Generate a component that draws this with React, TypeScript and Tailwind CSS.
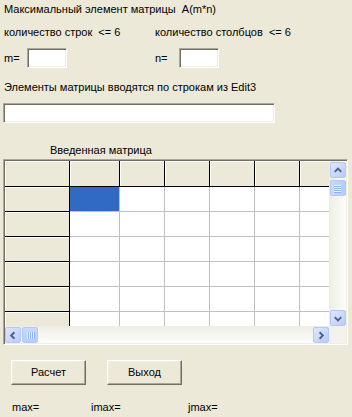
import React from "react";

const sunken =
  "border border-t-[#aca899] border-l-[#aca899] border-b-white border-r-white shadow-[inset_1px_1px_0_#716f64,inset_-1px_-1px_0_#f1efe2]";
const raised =
  "border border-t-white border-l-white border-b-[#716f64] border-r-[#716f64] shadow-[inset_-1px_-1px_0_#aca899,inset_1px_1px_0_#f1efe2]";

function Chevron({ dir }: { dir: "up" | "down" | "left" | "right" }) {
  const pts: Record<string, string> = {
    up: "4,9 7.5,5.5 11,9",
    down: "4,6 7.5,9.5 11,6",
    left: "9,4 5.5,7.5 9,11",
    right: "6,4 9.5,7.5 6,11",
  };
  return (
    <svg width="15" height="15" viewBox="0 0 15 15">
      <polyline points={pts[dir]} fill="none" stroke="#4d6185" strokeWidth="2" />
    </svg>
  );
}

function SBtn({ dir, cls }: { dir: "up" | "down" | "left" | "right"; cls?: string }) {
  return (
    <div
      className={`flex items-center justify-center rounded-[2px] border border-[#b4c8f6] bg-gradient-to-br from-[#dde6fd] to-[#b9cdfa] ${cls ?? ""}`}
    >
      <Chevron dir={dir} />
    </div>
  );
}

export default function App() {
  const dataCols = [50, 45, 45, 45, 45, 45];
  const rows = 6;
  return (
    <div
      className="w-[352px] h-[417px] bg-[#ece9d8] text-black text-[11px] leading-[13px] overflow-hidden flex flex-col"
      style={{ fontFamily: '"Liberation Sans", Arial, sans-serif' }}
    >
      <div className="mt-[3px] ml-[4px]">Максимальный элемент матрицы&nbsp;&nbsp;A(m*n)</div>
      <div className="mt-[10px] ml-[4px] flex">
        <div className="w-[151px]">количество строк&nbsp;&nbsp;&lt;= 6</div>
        <div>количество столбцов&nbsp;&nbsp;&lt;= 6</div>
      </div>
      <div className="mt-[9px] ml-[4px] flex items-center h-[20px]">
        <div className="w-[23px]">m=</div>
        <div className={`w-[40px] h-[20px] bg-white ${sunken}`} />
        <div className="ml-[88px] w-[24px]">n=</div>
        <div className={`w-[40px] h-[20px] bg-white ${sunken}`} />
      </div>
      <div className="mt-[13px] ml-[4px]">Элементы матрицы вводятся по строкам из Edit3</div>
      <div className={`mt-[9px] ml-[3px] w-[272px] h-[20px] bg-white ${sunken}`} />
      <div className="mt-[21px] ml-[50px]">Введенная матрица</div>
      <div className={`mt-[2px] ml-[3px] w-[345px] h-[186px] bg-white flex flex-col p-[1px] ${sunken}`}>
        <div className="flex h-[165px]">
          <div className="w-[324px] h-[165px] overflow-hidden">
            {Array.from({ length: rows + 1 }).map((_, r) => (
              <div key={r} className={`flex ${r === 0 ? "h-[26px]" : "h-[25px]"}`}>
                <div className="w-[65px] shrink-0 bg-[#ece9d8] border-r border-b border-black shadow-[inset_1px_1px_0_#fff]" />
                {dataCols.map((w, c) => (
                  <div
                    key={c}
                    style={{ width: w }}
                    className={`shrink-0 ${
                      r === 0
                        ? "bg-[#ece9d8] border-r border-b border-black shadow-[inset_1px_1px_0_#fff]"
                        : r === 1 && c === 0
                        ? "bg-[#316ac5] border-r border-b border-[#c0c0c0]"
                        : "bg-white border-r border-b border-[#c0c0c0]"
                    }`}
                  />
                ))}
              </div>
            ))}
          </div>
          <div className="w-[17px] h-[165px] bg-gradient-to-r from-[#eeede5] to-[#fdfdfa] flex flex-col items-center pt-[1px]">
            <SBtn dir="up" cls="w-[16px] h-[16px]" />
            <div className="mt-[2px] w-[16px] h-[16px] rounded-[2px] border border-[#b4c8f6] bg-gradient-to-r from-[#c9d8fc] to-[#b8ccf9] flex flex-col items-center justify-center gap-[1px]">
              {[0, 1, 2, 3].map((i) => (
                <div key={i} className="w-[7px] h-[1px] bg-[#eef3fe] shadow-[0_1px_0_#8cb0f8]" />
              ))}
            </div>
            <div className="flex-1" />
            <SBtn dir="down" cls="w-[16px] h-[16px]" />
          </div>
        </div>
        <div className="flex h-[17px]">
          <div className="w-[324px] h-[17px] bg-gradient-to-b from-[#eeede5] to-[#fdfdfa] flex items-start pt-[1px]">
            <SBtn dir="left" cls="w-[16px] h-[16px]" />
            <div className="ml-[1px] w-[16px] h-[16px] rounded-[2px] border border-[#b4c8f6] bg-gradient-to-b from-[#c9d8fc] to-[#b8ccf9] flex items-center justify-center gap-[1px]">
              {[0, 1, 2, 3].map((i) => (
                <div key={i} className="w-[1px] h-[7px] bg-[#eef3fe] shadow-[1px_0_0_#8cb0f8]" />
              ))}
            </div>
            <div className="flex-1" />
            <SBtn dir="right" cls="w-[16px] h-[16px]" />
          </div>
          <div className="w-[17px] h-[17px] bg-[#f3f2ec]" />
        </div>
      </div>
      <div className="mt-[15px] ml-[11px] flex gap-[21px]">
        <div className={`w-[75px] h-[25px] bg-[#ece9d8] flex items-center justify-center ${raised}`}>Расчет</div>
        <div className={`w-[75px] h-[25px] bg-[#ece9d8] flex items-center justify-center ${raised}`}>Выход</div>
      </div>
      <div className="mt-[16px] ml-[12px] flex">
        <div className="w-[79px]">max=</div>
        <div className="w-[97px]">imax=</div>
        <div>jmax=</div>
      </div>
    </div>
  );
}
